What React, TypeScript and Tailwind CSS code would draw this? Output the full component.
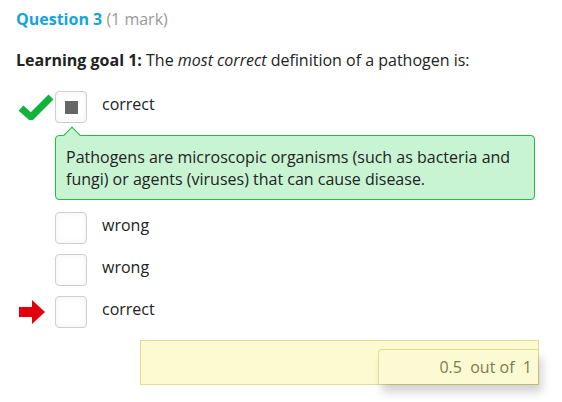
import type { ReactNode } from "react";

function Check() {
  return (
    <svg width="34" height="26" viewBox="0 0 34 26">
      <path d="M2 14 L12 23 L32 3" fill="none" stroke="#12b33a" strokeWidth="7" strokeLinejoin="miter" />
    </svg>
  );
}

function Arrow() {
  return (
    <svg width="26" height="24" viewBox="0 0 26 24">
      <polygon points="0,7 13,7 13,0 26,12 13,24 13,17 0,17" fill="#e4000f" />
    </svg>
  );
}

function Box({ checked }: { checked?: boolean }) {
  return (
    <div className="w-8 h-8 rounded-[4px] border border-[#cfcfcf] bg-white shadow-[inset_0_0_6px_rgba(0,0,0,0.06)] flex items-center justify-center shrink-0">
      {checked && <div className="w-[13px] h-[13px] bg-[#666666]" />}
    </div>
  );
}

function Option({ mark, checked, label }: { mark?: ReactNode; checked?: boolean; label: string }) {
  return (
    <div className="flex items-center h-8">
      <div className="w-[39px] h-8 flex items-center justify-start pl-[3px] shrink-0">{mark}</div>
      <Box checked={checked} />
      <span className="ml-[15px] mb-[7px] text-[16px] leading-[22px] text-[#222]">{label}</span>
    </div>
  );
}

export default function App() {
  return (
    <div className="w-[562px] h-[402px] bg-white pl-4 pt-[8px] font-['Open_Sans',sans-serif] text-[#222] overflow-hidden">
      <div className="text-[16px] leading-[22px]">
        <span className="font-bold text-[#13a4dd]">Question 3</span>{" "}
        <span className="text-[#999]">(1 mark)</span>
      </div>
      <p className="mt-[19px] text-[16px] leading-[22px]">
        <b>Learning goal 1:</b> The <i>most correct</i> definition of a pathogen is:
      </p>

      <div className="mt-[20px]">
        <Option mark={<Check />} checked label="correct" />
        <div className="relative ml-[39px] mt-[12px] w-[480px] rounded-[4px] border border-[#22bb44] bg-[#c9f4d4] px-[10px] pt-[10px] pb-[9px] text-[16px] leading-[22px]">
          <div className="absolute -top-[7px] left-[10px] w-3 h-3 rotate-45 bg-[#c9f4d4] border-l border-t border-[#22bb44]" />
          <span className="relative">
            Pathogens are microscopic organisms (such as bacteria and fungi) or agents (viruses) that can cause disease.
          </span>
        </div>
        <div className="mt-[12px] flex flex-col gap-[10px]">
          <Option label="wrong" />
          <Option label="wrong" />
          <Option mark={<Arrow />} label="correct" />
        </div>
      </div>

      <div className="ml-[124px] mt-[12px] w-[399px] h-[45px] bg-[#fcfad0] border border-[#e2dc97] flex justify-end items-end">
        <div className="w-[160px] h-[35px] border-l border-t border-[#e2dc97] rounded-tl-[4px] bg-[#fcfad3] shadow-[4px_8px_10px_rgba(0,0,0,0.18)] flex items-center justify-end pr-[6px] text-[16px] text-[#7d7a4f]">
          0.5&nbsp; out of&nbsp; 1
        </div>
      </div>
    </div>
  );
}
